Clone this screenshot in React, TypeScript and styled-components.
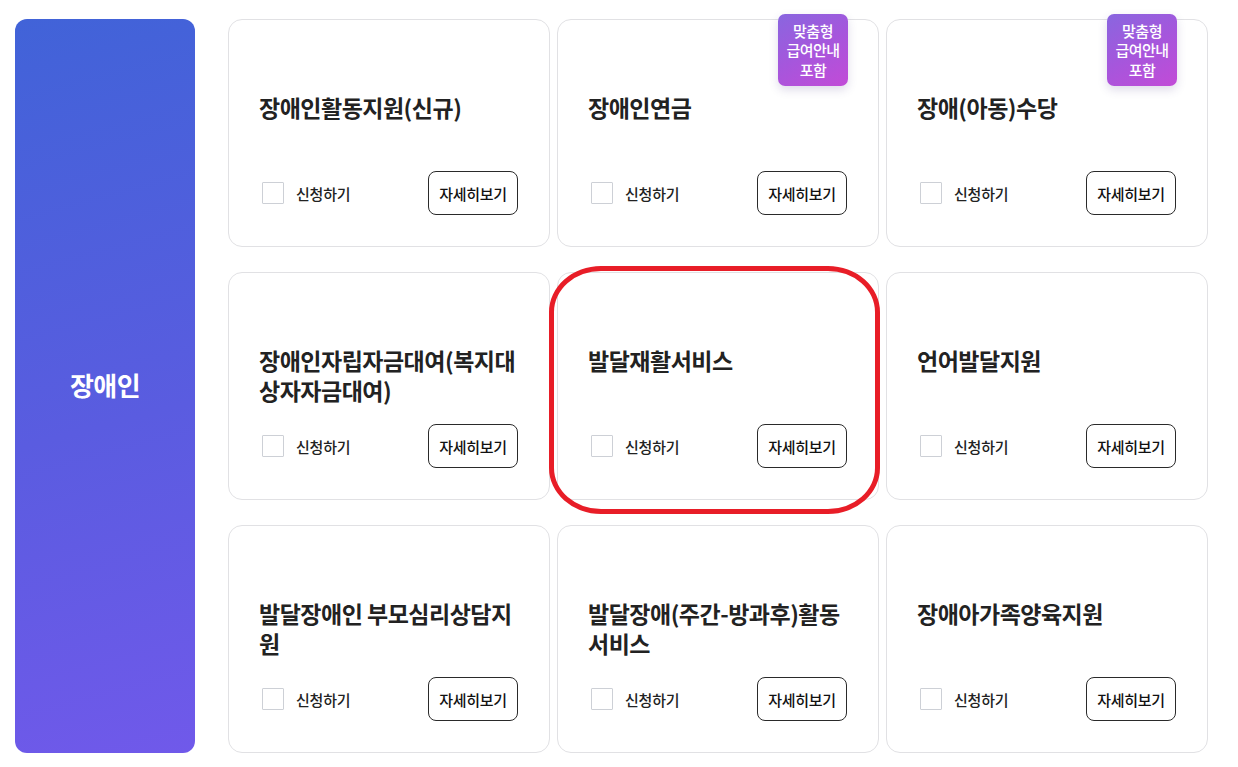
import React from "react";
import styled, { createGlobalStyle } from "styled-components";

const Global = createGlobalStyle`
  html, body { margin: 0; padding: 0; background: #fff; }
  body { font-family: "Noto Sans CJK KR", "Noto Sans", sans-serif; color: #222; }
  * { box-sizing: border-box; }
`;

const Page = styled.div`
  display: flex;
  gap: 33px;
  padding: 19px 30px 14px 15px;
`;

const Side = styled.div`
  width: 180px;
  height: 734px;
  flex: none;
  border-radius: 12px;
  background: linear-gradient(165deg, #4163d8 0%, #5a5ce0 55%, #7059ea 100%);
  display: flex;
  align-items: center;
  justify-content: center;
  padding-bottom: 4px;
  color: #fff;
  font-size: 26px;
  font-weight: 700;
  letter-spacing: -0.6px;
`;

const Grid = styled.div`
  display: grid;
  grid-template-columns: repeat(3, 322px);
  grid-auto-rows: 228px;
  column-gap: 7px;
  row-gap: 25px;
`;

const Card = styled.div`
  position: relative;
  border: 1px solid #e1e1e4;
  border-radius: 14px;
  background: #fff;
  display: flex;
  flex-direction: column;
  padding: 0 31px 31px 30px;
`;

const Title = styled.div`
  margin-top: 72px;
  font-size: 23px;
  line-height: 30px;
  font-weight: 700;
  color: #222;
  letter-spacing: -0.5px;
  word-break: break-all;
`;

const Footer = styled.div`
  margin-top: auto;
  display: flex;
  align-items: center;
  justify-content: space-between;
`;

const Check = styled.label`
  display: flex;
  align-items: center;
  gap: 12px;
  font-size: 15px;
  font-weight: 500;
  color: #222;
  padding-left: 3px;
  letter-spacing: -0.2px;
`;

const Box = styled.span`
  width: 22px;
  height: 22px;
  border: 1px solid #cdd0d6;
  border-radius: 1px;
  background: #fff;
`;

const DetailButton = styled.button`
  width: 90px;
  height: 44px;
  border: 1px solid #2a2a2a;
  border-radius: 8px;
  background: #fff;
  font-family: inherit;
  font-size: 15px;
  font-weight: 500;
  color: #111;
  letter-spacing: -0.3px;
  padding: 0;
`;

const Badge = styled.div`
  position: absolute;
  top: -6px;
  right: 30px;
  width: 70px;
  height: 72px;
  border-radius: 7px;
  background: linear-gradient(150deg, #8966df 0%, #a656dc 50%, #c24bd7 100%);
  box-shadow: 0 4px 10px rgba(80, 60, 140, 0.18);
  color: #fff;
  font-size: 15px;
  line-height: 19.5px;
  font-weight: 500;
  text-align: center;
  display: flex;
  align-items: center;
  justify-content: center;
  letter-spacing: -0.5px;
`;

const Highlight = styled.div`
  position: absolute;
  left: -9px;
  top: -7px;
  width: 331px;
  height: 248px;
  border: 5px solid #e81d27;
  border-radius: 52px / 46px;
  pointer-events: none;
`;

type Item = { title: string; badge?: boolean; marked?: boolean };

const items: Item[] = [
  { title: "장애인활동지원(신규)" },
  { title: "장애인연금", badge: true },
  { title: "장애(아동)수당", badge: true },
  { title: "장애인자립자금대여(복지대상자자금대여)" },
  { title: "발달재활서비스", marked: true },
  { title: "언어발달지원" },
  { title: "발달장애인 부모심리상담지원" },
  { title: "발달장애(주간-방과후)활동서비스" },
  { title: "장애아가족양육지원" },
];

export default function App() {
  return (
    <>
      <Global />
      <Page>
        <Side>장애인</Side>
        <Grid>
          {items.map((it) => (
            <Card key={it.title}>
              {it.badge && (
                <Badge>
                  맞춤형
                  <br />
                  급여안내
                  <br />
                  포함
                </Badge>
              )}
              <Title>{it.title}</Title>
              <Footer>
                <Check>
                  <Box />
                  신청하기
                </Check>
                <DetailButton>자세히보기</DetailButton>
              </Footer>
              {it.marked && <Highlight />}
            </Card>
          ))}
        </Grid>
      </Page>
    </>
  );
}
